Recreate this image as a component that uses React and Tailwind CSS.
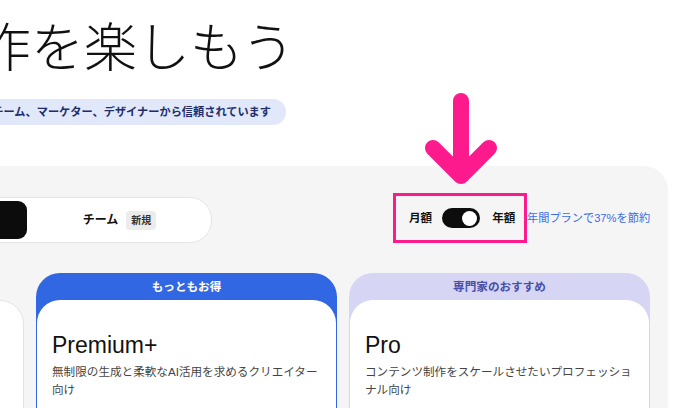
import { useState } from 'react';

const sans = "font-['Liberation_Sans','Noto_Sans_CJK_JP',sans-serif]";

function Toggle({ on }) {
  return (
    <div className={`flex h-[20px] w-[38px] items-center rounded-full bg-[#0d0d0d] px-[3px] ${on ? 'justify-end' : 'justify-start'}`}>
      <div className="h-[15px] w-[15px] rounded-full bg-white" />
    </div>
  );
}

function PlanCard({ badge, badgeClass, frameClass, name, desc }) {
  return (
    <div className={`w-[301px] shrink-0 rounded-t-[24px] px-px ${frameClass}`}>
      <div className={`flex h-[27px] items-center justify-center text-[11.6px] font-bold ${badgeClass}`}>{badge}</div>
      <div className="h-[120px] rounded-t-[23px] bg-white px-[15px] pt-[31px]">
        <h3 className="text-[23px] leading-[28px] text-[#111]">{name}</h3>
        <p className="mt-[4px] text-[11.6px] leading-[18px] text-[#444]">{desc}</p>
      </div>
    </div>
  );
}

export default function App() {
  const [yearly] = useState(true);

  return (
    <div className={`relative h-[408px] w-[690px] overflow-hidden bg-white ${sans}`}>
      <h1 className="ml-[-22px] mt-[18px] whitespace-nowrap font-['Noto_Sans_CJK_JP',sans-serif] text-[53px] font-light leading-[52px] text-[#111]">
        作を楽しもう
      </h1>

      <div className="mt-[29px] flex w-[286px] justify-end">
        <div className="flex h-[26px] shrink-0 items-center whitespace-nowrap rounded-full bg-[#e0e8fa] pl-[14px] pr-[15px] text-[11.2px] font-bold text-[#1f2d6b]">
          クリエイティブチーム、マーケター、デザイナーから信頼されています
        </div>
      </div>

      <div className="ml-[-300px] mt-[41px] h-[300px] w-[968px] rounded-tr-[24px] bg-[#f5f5f5] pt-[27px]">
        <div className="flex items-start">
          <div className="ml-[142px] mt-[4px] grid h-[46px] w-[370px] grid-cols-2 rounded-[22px] border border-[#e5e5e5] bg-white p-[3px]">
            <div className="flex items-center justify-center rounded-[9px] bg-[#0c0c0c] text-[12px] font-bold text-white">個人</div>
            <div className="flex items-center justify-center gap-[8px] pl-[4px] text-[12px] font-bold text-[#111]">
              チーム
              <span className="rounded-[4px] bg-[#ececec] px-[5px] py-[2px] text-[10px] text-[#333]">新規</span>
            </div>
          </div>

          <div className="ml-[181px] flex h-[50px] w-[134px] items-center border-[3px] border-[#fd1a8d] pl-[13px] text-[11.6px] font-bold text-[#111]">
            <span>月額</span>
            <div className="ml-[10px] mr-[12px]">
              <Toggle on={yearly} />
            </div>
            <span>年額</span>
          </div>
          <span className="mt-[17px] whitespace-nowrap text-[11.2px] text-[#3a6de8]">年間プランで37%を節約</span>
        </div>

        <div className="mt-[30px] flex gap-[12px] pl-[23px]">
          <div className="mt-[27px] h-[120px] w-[301px] shrink-0 rounded-t-[24px] border border-[#e4e4e4] bg-white" />
          <PlanCard
            badge="もっともお得"
            badgeClass="text-white"
            frameClass="bg-[#3267e3]"
            name="Premium+"
            desc="無制限の生成と柔軟なAI活用を求めるクリエイター向け"
          />
          <PlanCard
            badge="専門家のおすすめ"
            badgeClass="text-[#4a4fa8]"
            frameClass="bg-[#d6d6f4]"
            name="Pro"
            desc="コンテンツ制作をスケールさせたいプロフェッショナル向け"
          />
        </div>
      </div>

      <svg className="pointer-events-none absolute left-[420px] top-[86px]" width="84" height="108" viewBox="0 0 84 108" fill="none">
        <path d="M41 15 L41 89 M13 62 L41 90 L69 62" stroke="#fd1a8d" strokeWidth="16" strokeLinecap="round" strokeLinejoin="round" />
      </svg>
    </div>
  );
}
